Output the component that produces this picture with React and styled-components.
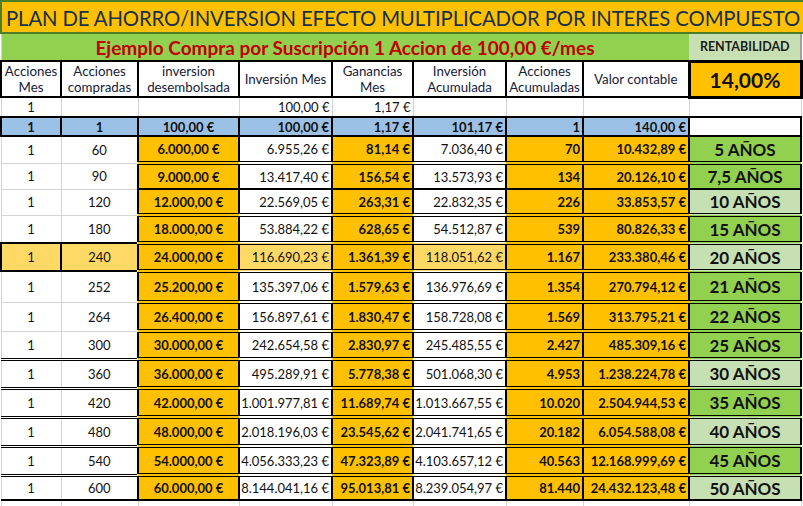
import React from "react";
import styled, { createGlobalStyle } from "styled-components";

const GlobalStyle = createGlobalStyle`
  html, body {
    margin: 0;
    padding: 0;
    background: #ffffff;
    overflow: hidden;
  }
  body {
    font-family: Lato, "Noto Sans", "Liberation Sans", sans-serif;
  }
`;

const ORANGE = "#ffc000";
const PALE_ORANGE = "#ffd966";
const GREEN = "#92d050";
const PALE_GREEN = "#c6e0b4";
const BLUE = "#9bc2e6";
const GRID = "#d4d4d4";

const Sheet = styled.table`
  width: 803px;
  table-layout: fixed;
  border-collapse: collapse;
  color: #111;
  font-size: 13px;
`;

const TitleCell = styled.td`
  height: 29px;
  padding: 1px 0 0 4px;
  background: ${ORANGE};
  border: 2px solid #4e7d2a;
  color: #17304f;
  font-size: 20.3px;
  letter-spacing: -0.1px;
  white-space: nowrap;
  overflow: hidden;
`;

const SubtitleCell = styled.td`
  height: 26px;
  padding: 0;
  background: ${GREEN};
  border: 1px solid ${GRID};
  color: #c00000;
  font-size: 19px;
  font-weight: 700;
  text-align: center;
  white-space: nowrap;
`;

const RentCell = styled.td`
  padding: 0;
  background: ${PALE_GREEN};
  border: 1px solid ${GRID};
  border-right: 2px solid #a0a0a0;
  font-size: 12.5px;
  font-weight: 700;
  text-align: center;
  color: #1c1c1c;
`;

const HeadCell = styled.td`
  height: 34px;
  padding: 0 1px;
  background: #ffffff;
  border: 2px solid #000;
  font-size: 13.3px;
  line-height: 16px;
  text-align: center;
  color: #15203a;
`;

const RateCell = styled.td`
  padding: 0;
  background: ${ORANGE};
  border: 3px solid #000;
  font-size: 21px;
  font-weight: 700;
  text-align: center;
`;

const Row = styled.tr`
  height: ${(p) => p.$h}px;
`;

const Cell = styled.td`
  padding: 0 ${(p) => (p.$align === "right" ? "2px" : "1px")} 0 1px;
  background: ${(p) => p.$bg || "#ffffff"};
  text-align: ${(p) => p.$align || "center"};
  font-weight: ${(p) => (p.$bold ? 700 : 400)};
  font-size: ${(p) => p.$size || 13}px;
  white-space: nowrap;
  overflow: visible;
  border-left: ${(p) => p.$side || `1px solid ${GRID}`};
  border-right: ${(p) => p.$side || `1px solid ${GRID}`};
  border-top: ${(p) => p.$top || `1px solid ${GRID}`};
  border-bottom: ${(p) => p.$bottom || `1px solid ${GRID}`};
`;

const Blank = styled.td`
  padding: 0;
  border: 1px solid ${GRID};
`;

const rows = [
  { h: 27, n: 60, c: "6.000,00 €", d: "6.955,26 €", e: "81,14 €", f: "7.036,40 €", g: "70", hv: "10.432,89 €", y: "5 AÑOS", bright: true },
  { h: 26, n: 90, c: "9.000,00 €", d: "13.417,40 €", e: "156,54 €", f: "13.573,93 €", g: "134", hv: "20.126,10 €", y: "7,5 AÑOS", bright: true, single: true },
  { h: 26, n: 120, c: "12.000,00 €", d: "22.569,05 €", e: "263,31 €", f: "22.832,35 €", g: "226", hv: "33.853,57 €", y: "10 AÑOS" },
  { h: 28, n: 180, c: "18.000,00 €", d: "53.884,22 €", e: "628,65 €", f: "54.512,87 €", g: "539", hv: "80.826,33 €", y: "15 AÑOS", bright: true },
  { h: 28, n: 240, c: "24.000,00 €", d: "116.690,23 €", e: "1.361,39 €", f: "118.051,62 €", g: "1.167", hv: "233.380,46 €", y: "20 AÑOS", mark: true },
  { h: 31, n: 252, c: "25.200,00 €", d: "135.397,06 €", e: "1.579,63 €", f: "136.976,69 €", g: "1.354", hv: "270.794,12 €", y: "21 AÑOS", bright: true },
  { h: 29, n: 264, c: "26.400,00 €", d: "156.897,61 €", e: "1.830,47 €", f: "158.728,08 €", g: "1.569", hv: "313.795,21 €", y: "22 AÑOS", bright: true },
  { h: 28, n: 300, c: "30.000,00 €", d: "242.654,58 €", e: "2.830,97 €", f: "245.485,55 €", g: "2.427", hv: "485.309,16 €", y: "25 AÑOS", bright: true },
  { h: 29, n: 360, c: "36.000,00 €", d: "495.289,91 €", e: "5.778,38 €", f: "501.068,30 €", g: "4.953", hv: "1.238.224,78 €", y: "30 AÑOS", box: true },
  { h: 29, n: 420, c: "42.000,00 €", d: "1.001.977,81 €", e: "11.689,74 €", f: "1.013.667,55 €", g: "10.020", hv: "2.504.944,53 €", y: "35 AÑOS", bright: true },
  { h: 29, n: 480, c: "48.000,00 €", d: "2.018.196,03 €", e: "23.545,62 €", f: "2.041.741,65 €", g: "20.182", hv: "6.054.588,08 €", y: "40 AÑOS", box: true },
  { h: 29, n: 540, c: "54.000,00 €", d: "4.056.333,23 €", e: "47.323,89 €", f: "4.103.657,12 €", g: "40.563", hv: "12.168.999,69 €", y: "45 AÑOS", bright: true, box: true },
  { h: 25, n: 600, c: "60.000,00 €", d: "8.144.041,16 €", e: "95.013,81 €", f: "8.239.054,97 €", g: "81.440", hv: "24.432.123,48 €", y: "50 AÑOS", box: true, last: true },
];

const widths = [60, 77, 101, 93, 81, 93, 77, 106, 112, 3];

const DataRow = ({ r }) => {
  const line = r.last ? "2px solid #000" : r.single ? "2px solid #000" : "4px double #000";
  const side = "2px solid #000";
  const leftLine = r.mark ? "2px solid #000" : r.box ? "3px double #000" : undefined;
  const leftSide = r.mark ? "2px solid #000" : undefined;
  const pale = r.mark ? PALE_ORANGE : "#ffffff";
  return (
    <Row $h={r.h}>
      <Cell $bg={pale} $top={leftLine} $bottom={r.last ? "2px solid #000" : leftLine} $side={leftSide}>1</Cell>
      <Cell $bg={pale} $top={leftLine} $bottom={r.last ? "2px solid #000" : leftLine} $side={leftSide}>{r.n}</Cell>
      <Cell $bg={ORANGE} $bold $side={side} $bottom={line}>{r.c}</Cell>
      <Cell $bg={pale} $align="right" $side={side} $bottom={line}>{r.d}</Cell>
      <Cell $bg={ORANGE} $bold $align="right" $side={side} $bottom={line}>{r.e}</Cell>
      <Cell $bg={pale} $align="right" $side={side} $bottom={line}>{r.f}</Cell>
      <Cell $bg={ORANGE} $bold $align="right" $side={side} $bottom={line}>{r.g}</Cell>
      <Cell $bg={ORANGE} $bold $align="right" $side={side} $bottom={line}>{r.hv}</Cell>
      <Cell $bg={r.bright ? GREEN : PALE_GREEN} $bold $size={17} $side={side} $bottom={line}>{r.y}</Cell>
      <Blank />
    </Row>
  );
};

export default function App() {
  const thick = "2px solid #000";
  return (
    <>
      <GlobalStyle />
      <Sheet>
        <colgroup>
          {widths.map((w, i) => (
            <col key={i} style={{ width: w }} />
          ))}
        </colgroup>
        <tbody>
          <tr>
            <TitleCell colSpan={10}>
              PLAN DE AHORRO/INVERSION EFECTO MULTIPLICADOR POR INTERES COMPUESTO
            </TitleCell>
          </tr>
          <tr>
            <SubtitleCell colSpan={8}>
              Ejemplo Compra por Suscripción 1 Accion de 100,00 €/mes
            </SubtitleCell>
            <RentCell>RENTABILIDAD</RentCell>
            <Blank />
          </tr>
          <tr>
            <HeadCell>Acciones<br />Mes</HeadCell>
            <HeadCell>Acciones<br />compradas</HeadCell>
            <HeadCell>inversion<br />desembolsada</HeadCell>
            <HeadCell>Inversión Mes</HeadCell>
            <HeadCell>Ganancias<br />Mes</HeadCell>
            <HeadCell>Inversión<br />Acumulada</HeadCell>
            <HeadCell>Acciones<br />Acumuladas</HeadCell>
            <HeadCell>Valor contable</HeadCell>
            <RateCell>14,00%</RateCell>
            <Blank />
          </tr>
          <Row $h={20}>
            <Cell>1</Cell>
            <Cell />
            <Cell />
            <Cell $align="right">100,00 €</Cell>
            <Cell $align="right">1,17 €</Cell>
            <Cell />
            <Cell />
            <Cell />
            <Cell />
            <Blank />
          </Row>
          <Row $h={19}>
            <Cell $bg={BLUE} $bold $side={thick} $top={thick} $bottom={thick}>1</Cell>
            <Cell $bg={BLUE} $bold $side={thick} $top={thick} $bottom={thick}>1</Cell>
            <Cell $bg={BLUE} $bold $side={thick} $top={thick} $bottom={thick}>100,00 €</Cell>
            <Cell $bg={BLUE} $bold $align="right" $side={thick} $top={thick} $bottom={thick}>100,00 €</Cell>
            <Cell $bg={BLUE} $bold $align="right" $side={thick} $top={thick} $bottom={thick}>1,17 €</Cell>
            <Cell $bg={BLUE} $bold $align="right" $side={thick} $top={thick} $bottom={thick}>101,17 €</Cell>
            <Cell $bg={BLUE} $bold $align="right" $side={thick} $top={thick} $bottom={thick}>1</Cell>
            <Cell $bg={BLUE} $bold $align="right" $side={thick} $top={thick} $bottom={thick}>140,00 €</Cell>
            <Cell $side={thick} $top={thick} $bottom={thick} />
            <Blank />
          </Row>
          {rows.map((r) => (
            <DataRow key={r.n} r={r} />
          ))}
          <Row $h={8}>
            {widths.map((w, i) => (
              <Blank key={i} />
            ))}
          </Row>
        </tbody>
      </Sheet>
    </>
  );
}
